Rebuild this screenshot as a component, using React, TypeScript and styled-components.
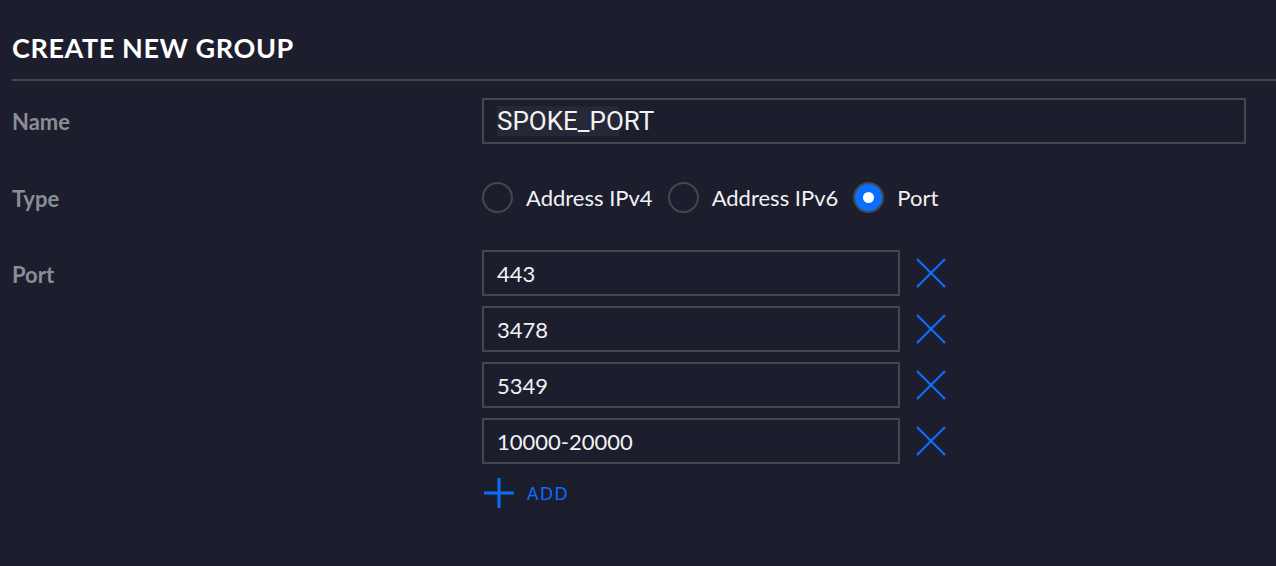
import React from 'react';
import styled, { createGlobalStyle } from 'styled-components';

const GlobalStyle = createGlobalStyle`
  html, body {
    margin: 0;
    padding: 0;
    background: #1d1e2d;
  }
  body {
    font-family: Lato, "Noto Sans", sans-serif;
    color: #f2f2f4;
  }
`;

const Page = styled.div`
  min-height: 566px;
  background: #1d1e2d;
  padding: 32px 0 0 12px;
  box-sizing: border-box;
`;

const Title = styled.h1`
  margin: 0;
  font-size: 27px;
  font-weight: 700;
  letter-spacing: 0.6px;
  line-height: 32px;
  color: #ffffff;
  padding-bottom: 15px;
  border-bottom: 2px solid #41494f;
`;

const Row = styled.div<{ $top: number }>`
  display: grid;
  grid-template-columns: 470px 1fr;
  margin-top: ${p => p.$top}px;
  align-items: start;
`;

const Label = styled.div<{ $pad: number }>`
  font-size: 22px;
  font-weight: 700;
  color: #8a8d96;
  padding-top: ${p => p.$pad}px;
  line-height: 24px;
`;

const TextBox = styled.div<{ $width: number; $font?: string; $size?: number }>`
  width: ${p => p.$width}px;
  height: 46px;
  box-sizing: border-box;
  border: 2px solid #41494f;
  display: flex;
  align-items: center;
  padding-left: 13px;
  font-family: ${p => p.$font || 'Lato, sans-serif'};
  font-size: ${p => p.$size || 22}px;
  color: #f2f2f4;
`;

const Selected = styled.span`
  background: linear-gradient(#272837, #272837) no-repeat -5px 0;
  background-size: 127px 100%;
  padding: 1px 0;
  line-height: 28px;
`;

const RadioGroup = styled.div`
  display: flex;
  align-items: center;
  height: 32px;
  padding-top: 1px;
`;

const RadioItem = styled.label`
  display: flex;
  align-items: center;
  gap: 13px;
  margin-right: 15px;
  font-size: 22px;
  color: #f2f2f4;
`;

const RadioCircle = styled.span<{ $on?: boolean }>`
  width: 31px;
  height: 31px;
  box-sizing: border-box;
  border-radius: 50%;
  border: 2px solid #41494f;
  background: ${p => (p.$on ? '#0a6eff' : 'transparent')};
  display: flex;
  align-items: center;
  justify-content: center;
  &::after {
    content: '';
    display: ${p => (p.$on ? 'block' : 'none')};
    width: 11px;
    height: 11px;
    border-radius: 50%;
    background: #ffffff;
  }
`;

const PortList = styled.div`
  display: flex;
  flex-direction: column;
  gap: 10px;
`;

const PortRow = styled.div`
  display: flex;
  align-items: center;
  gap: 15px;
`;

const IconButton = styled.button`
  background: none;
  border: none;
  padding: 0;
  width: 32px;
  height: 32px;
  display: flex;
  align-items: center;
  justify-content: center;
  cursor: pointer;
`;

const AddButton = styled.button`
  display: flex;
  align-items: center;
  gap: 12px;
  background: none;
  border: none;
  padding: 0 0 0 1px;
  margin-top: 3px;
  font-family: Lato, sans-serif;
  font-size: 17px;
  letter-spacing: 1.5px;
  color: #0a6eff;
  cursor: pointer;
`;

const Cross = () => (
  <svg width="32" height="32" viewBox="0 0 32 32">
    <path d="M2 2 L30 30 M30 2 L2 30" stroke="#0a6eff" strokeWidth="2.2" fill="none" />
  </svg>
);

const Plus = () => (
  <svg width="32" height="32" viewBox="0 0 32 32">
    <path d="M16 1 V31 M1 16 H31" stroke="#0a6eff" strokeWidth="3" fill="none" />
  </svg>
);

const ports = ['443', '3478', '5349', '10000-20000'];

export default function App() {
  return (
    <>
      <GlobalStyle />
      <Page>
        <Title>CREATE NEW GROUP</Title>

        <Row $top={17}>
          <Label $pad={12}>Name</Label>
          <TextBox $width={764} $font="Roboto, sans-serif" $size={26}>
            <Selected>SPOKE_PORT</Selected>
          </TextBox>
        </Row>

        <Row $top={36}>
          <Label $pad={7}>Type</Label>
          <RadioGroup>
            <RadioItem>
              <RadioCircle />
              Address IPv4
            </RadioItem>
            <RadioItem>
              <RadioCircle />
              Address IPv6
            </RadioItem>
            <RadioItem>
              <RadioCircle $on />
              Port
            </RadioItem>
          </RadioGroup>
        </Row>

        <Row $top={37}>
          <Label $pad={13}>Port</Label>
          <PortList>
            {ports.map(p => (
              <PortRow key={p}>
                <TextBox $width={418}>{p}</TextBox>
                <IconButton aria-label="remove">
                  <Cross />
                </IconButton>
              </PortRow>
            ))}
            <AddButton>
              <Plus />
              ADD
            </AddButton>
          </PortList>
        </Row>
      </Page>
    </>
  );
}
